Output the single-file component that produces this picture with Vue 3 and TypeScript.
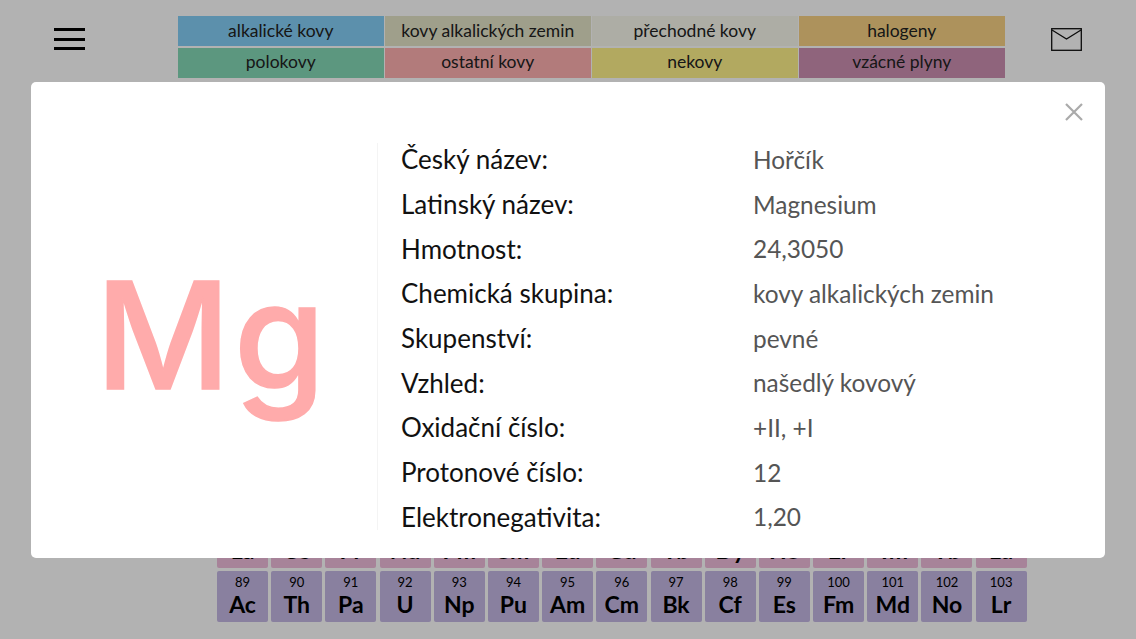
<script setup lang="ts">
interface Cell {
  no: number
  sym: string
}

const legend = [
  { label: 'alkalické kovy', color: '#84cff6' },
  { label: 'kovy alkalických zemin', color: '#e4e4c8' },
  { label: 'přechodné kovy', color: '#f8f8ec' },
  { label: 'halogeny', color: '#f8d284' },
  { label: 'polokovy', color: '#84d8b6' },
  { label: 'ostatní kovy', color: '#ffb0b0' },
  { label: 'nekovy', color: '#fff38a' },
  { label: 'vzácné plyny', color: '#cd90b2' }
]

const toCells = (start: number, symbols: string[]): Cell[] =>
  symbols.map((sym, i) => ({ no: start + i, sym }))

const lanthanides = toCells(57, ['La', 'Ce', 'Pr', 'Nd', 'Pm', 'Sm', 'Eu', 'Gd', 'Tb', 'Dy', 'Ho', 'Er', 'Tm', 'Yb', 'Lu'])
const actinides = toCells(89, ['Ac', 'Th', 'Pa', 'U', 'Np', 'Pu', 'Am', 'Cm', 'Bk', 'Cf', 'Es', 'Fm', 'Md', 'No', 'Lr'])

const details = [
  ['Český název:', 'Hořčík'],
  ['Latinský název:', 'Magnesium'],
  ['Hmotnost:', '24,3050'],
  ['Chemická skupina:', 'kovy alkalických zemin'],
  ['Skupenství:', 'pevné'],
  ['Vzhled:', 'našedlý kovový'],
  ['Oxidační číslo:', '+II, +I'],
  ['Protonové číslo:', '12'],
  ['Elektronegativita:', '1,20']
]
</script>

<template>
  <div class="page">
    <header class="topbar">
      <button class="menu" aria-label="Menu">
        <span></span><span></span><span></span>
      </button>
      <div class="legend">
        <div v-for="item in legend" :key="item.label" class="legend-item" :style="{ background: item.color }">
          {{ item.label }}
        </div>
      </div>
      <svg class="mail" viewBox="0 0 31 23" fill="none" stroke="#111" stroke-width="1.3">
        <rect x="0.7" y="0.7" width="29.6" height="21.6" />
        <path d="M1 2l14.5 9L30 2" />
      </svg>
    </header>

    <main class="table">
      <div class="series lanthanides">
        <div v-for="c in lanthanides" :key="c.no" class="cell">
          <small>{{ c.no }}</small>
          <b>{{ c.sym }}</b>
        </div>
      </div>
      <div class="series actinides">
        <div v-for="c in actinides" :key="c.no" class="cell">
          <small>{{ c.no }}</small>
          <b>{{ c.sym }}</b>
        </div>
      </div>
    </main>

    <div class="overlay">
      <section class="modal">
        <svg class="close" viewBox="0 0 18 18" fill="none" stroke="#aaa" stroke-width="2.2">
          <path d="M1 1l16 16M17 1L1 17" />
        </svg>
        <div class="symbol">Mg</div>
        <div class="details">
          <div class="rows">
            <template v-for="row in details" :key="row[0]">
              <div class="label">{{ row[0] }}</div>
              <div class="value">{{ row[1] }}</div>
            </template>
          </div>
        </div>
      </section>
    </div>
  </div>
</template>

<style>
html,
body {
  margin: 0;
  background: #fff;
}
</style>

<style scoped>
.page {
  position: relative;
  display: flex;
  flex-direction: column;
  justify-content: space-between;
  width: 1136px;
  height: 639px;
  overflow: hidden;
  box-sizing: border-box;
  padding: 16px 54px 17px;
  background: #fff;
  font-family: Lato, "Open Sans", sans-serif;
  color: #000;
}

.topbar {
  display: flex;
  align-items: flex-start;
}

.menu {
  display: flex;
  flex-direction: column;
  gap: 6.5px;
  width: 31px;
  margin-top: 12px;
  padding: 0;
  border: 0;
  background: none;
}

.menu span {
  display: block;
  height: 3px;
  background: #000;
}

.legend {
  display: grid;
  grid-template-columns: repeat(4, 205.5px);
  grid-template-rows: 30px 29.5px;
  gap: 2px 1.5px;
  margin-left: 93px;
}

.legend-item {
  display: flex;
  align-items: center;
  justify-content: center;
  box-sizing: border-box;
  padding-bottom: 2px;
  font-size: 17.5px;
  color: #222;
}

.mail {
  width: 31px;
  height: 23px;
  margin: 12px 0 0 auto;
}

.table {
  display: flex;
  flex-direction: column;
  gap: 3px;
  margin-left: 163px;
}

.series {
  display: flex;
  gap: 3.2px;
}

.cell {
  display: flex;
  flex-direction: column;
  align-items: center;
  box-sizing: border-box;
  width: 51px;
  height: 51px;
  padding-top: 4px;
  border-radius: 2px;
}

.lanthanides .cell {
  background: #f0bcdc;
}

.actinides .cell {
  background: #c4b8e4;
}

.cell small {
  font-size: 13px;
  line-height: 15px;
}

.cell b {
  font-size: 23px;
  font-weight: 700;
  line-height: 28px;
}

.overlay {
  position: absolute;
  inset: 0;
  display: flex;
  box-sizing: border-box;
  padding: 82px 31px 81px;
  background: rgba(0, 0, 0, 0.3);
}

.modal {
  position: relative;
  display: flex;
  flex: 1;
  align-items: center;
  border-radius: 5px;
  background: #fff;
}

.close {
  position: absolute;
  top: 21px;
  right: 22px;
  width: 18px;
  height: 18px;
}

.symbol {
  display: flex;
  align-items: center;
  justify-content: center;
  box-sizing: border-box;
  width: 346px;
  padding: 30px 0 0 16px;
  font-family: Inter, sans-serif;
  font-size: 148px;
  font-weight: 500;
  letter-spacing: 3px;
  color: #ffabab;
  -webkit-text-stroke: 1.5px #ffabab;
}

.details {
  align-self: flex-start;
  box-sizing: border-box;
  height: 387px;
  margin-top: 61px;
  padding-left: 23px;
  border-left: 1px solid #f4f4f4;
}

.rows {
  display: grid;
  grid-template-columns: 352px auto;
  grid-auto-rows: 44.7px;
  align-items: center;
  margin-top: -6px;
}

.label {
  font-size: 26px;
  color: #111;
}

.value {
  font-size: 24.4px;
  color: #555;
}
</style>
